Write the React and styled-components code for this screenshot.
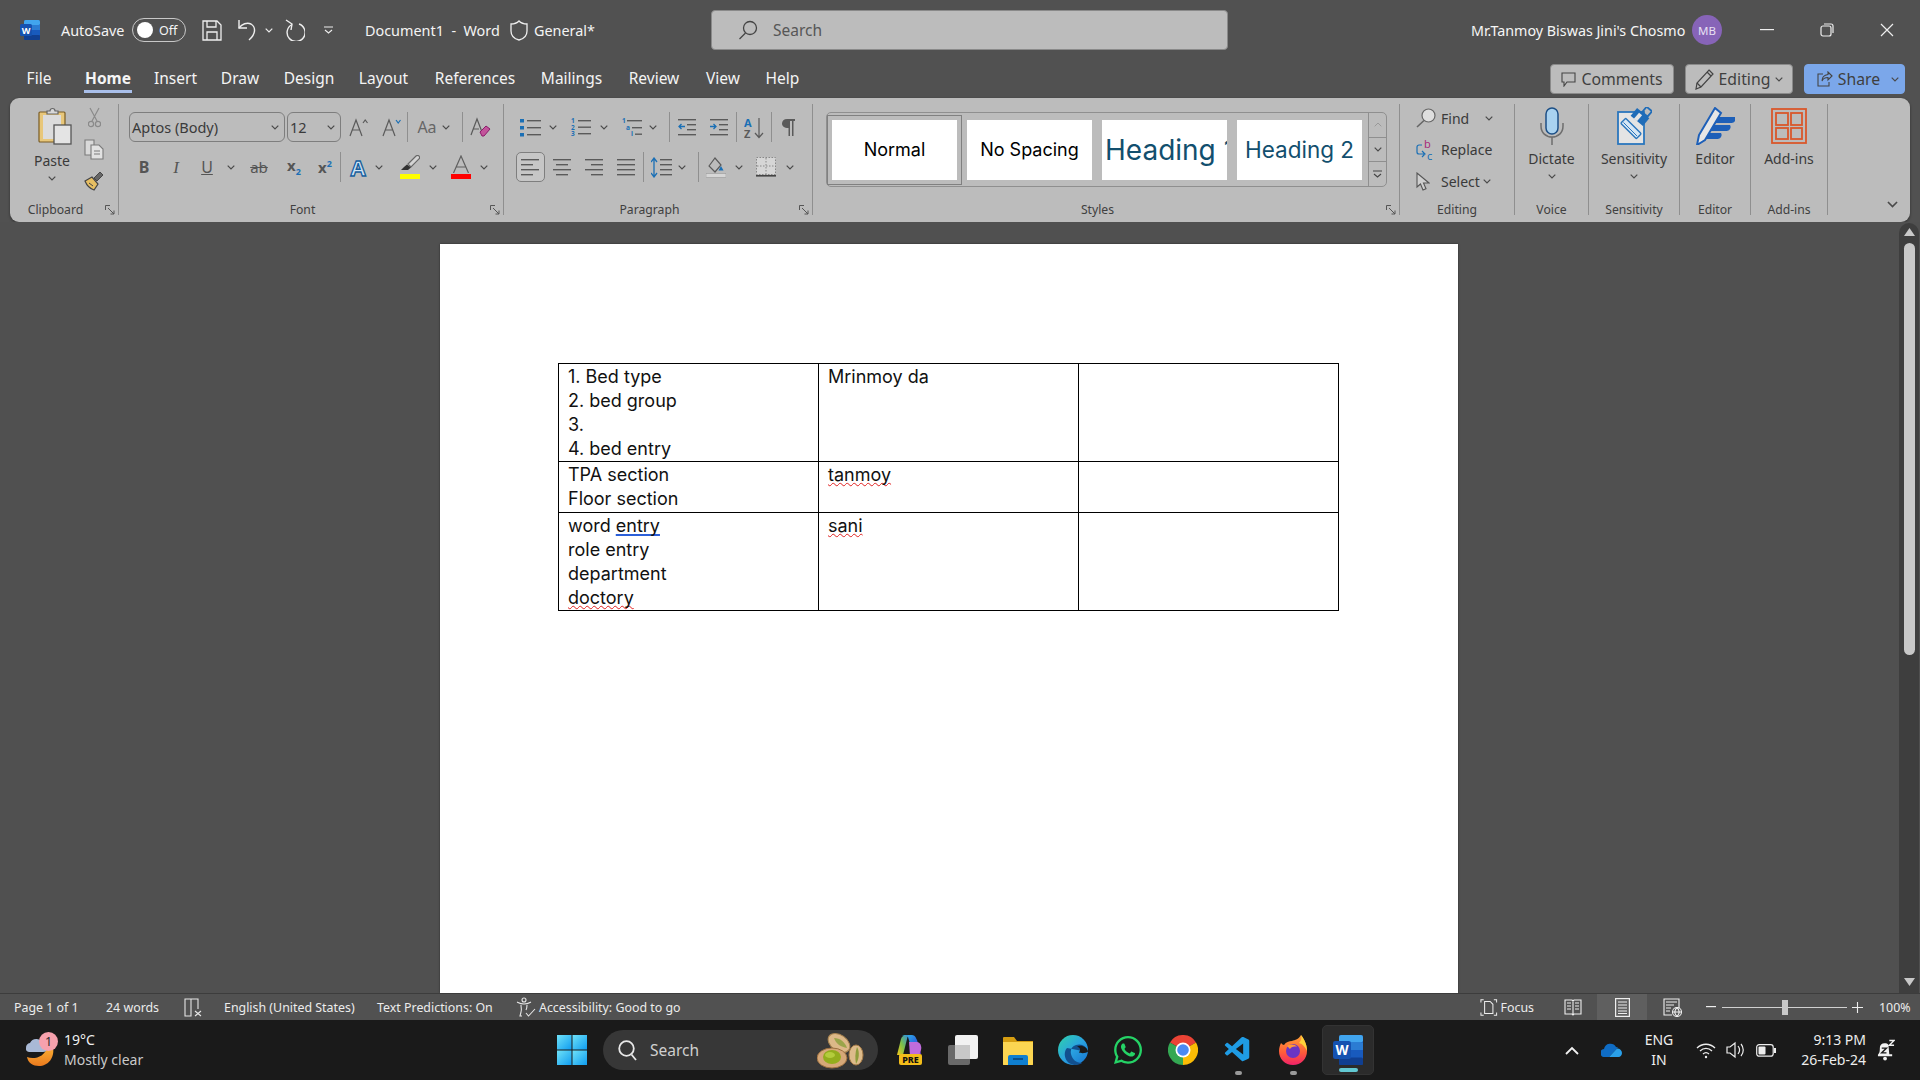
import React from 'react';
import styled, { createGlobalStyle } from 'styled-components';
import { FaWhatsapp } from 'react-icons/fa';
import { VscVscode } from 'react-icons/vsc';

const UI = '"Noto Sans", "Open Sans", sans-serif';
const Global = createGlobalStyle`
  html, body { margin: 0; padding: 0; background: #515151; overflow: hidden; }
  * { box-sizing: border-box; }
  body { font-family: ${UI}; }
`;
const Screen = styled.div`width: 1920px; height: 1080px; display: flex; flex-direction: column; background: #515151; overflow: hidden;`;

/* title bar */
const TitleBar = styled.div`height: 62px; flex: none; display: flex; align-items: center; color: #f4f4f4; font-size: 14.4px; padding: 0 0 2px 20px;`;
const TitleSlot = styled.div`flex: none; display: flex; align-items: center; justify-content: ${p => p.$center ? 'center' : 'flex-start'}; width: ${p => p.$w}px; margin-left: ${p => p.$ml || 0}px; white-space: nowrap; height: 40px;`;
const Toggle = styled.div`width: 54px; height: 24px; border: 1px solid #c8c8c8; border-radius: 12px; display: flex; align-items: center; gap: 6px; padding-left: 4px; font-size: 12.5px;`;
const Knob = styled.span`width: 16px; height: 16px; border-radius: 50%; background: #fff; flex: none;`;
const SearchBox = styled.div`width: 517px; height: 40px; background: #bcbcbc; border: 1px solid #8a8a8a; border-radius: 4px; display: flex; align-items: center; gap: 15px; padding-left: 26px; color: #565656; font-size: 15.5px;`;
const UserName = styled.div`width: 212px; white-space: nowrap; font-size: 14.3px; color: #f6f6f6;`;
const Avatar = styled.div`width: 30px; height: 30px; margin-left: 9px; border-radius: 50%; background: #8764b8; display: flex; align-items: center; justify-content: center; font-size: 11.5px; color: #e8e0f3;`;

/* tabs */
const TabRow = styled.div`height: 36px; flex: none; display: flex; align-items: flex-start; padding-left: 27px; position: relative;`;
const Tab = styled.div`flex: none; width: ${p => p.$w}px; margin-right: ${p => p.$gap}px; height: 31px; display: flex; justify-content: center; align-items: center; white-space: nowrap; color: #f4f4f4; font-size: 15.5px; font-weight: ${p => p.$on ? 700 : 400}; border-bottom: 3px solid ${p => p.$on ? '#a9bfea' : 'transparent'}; padding-top: 3px;`;
const TabActions = styled.div`margin-left: auto; display: flex; gap: 11px; padding-right: 15px; padding-top: 2px;`;
const ActionButton = styled.div`height: 30px; width: ${p => p.$w}px; border-radius: 4px; background: ${p => p.$blue ? '#7ba7ea' : '#bcbcbc'}; border: 1px solid ${p => p.$blue ? '#7ba7ea' : '#8a8a8a'}; color: #3f3f3f; font-size: 15.8px; display: flex; align-items: center; justify-content: center; gap: 5px; white-space: nowrap;`;
const ShareChev = styled.span`display: flex; margin-left: 6px; margin-right: -7px;`;

/* ribbon */
const Ribbon = styled.div`height: 124px; flex: none; margin: 0 10px; background: #bcbcbc; border-radius: 9px; display: flex; align-items: flex-start; box-shadow: 0 1px 3px rgba(0,0,0,.4); padding-top: 6px; color: #3c3c3c;`;
const Group = styled.div`flex: none; width: ${p => p.$w}px; height: 111px; border-right: 1px solid #8f8f8f; display: flex; flex-direction: column;`;
const GroupBody = styled.div`flex: none; height: 94px;`;
const GroupLabel = styled.div`flex: none; height: 20px; display: flex; align-items: center; font-size: 12.2px; color: #404040; padding-top: 3px;`;
const LabelText = styled.div`flex: 1; text-align: center;`;
const Launcher = styled.div`width: 17px; display: flex; justify-content: center;`;
const Rows = styled.div`padding-top: 8px; display: flex; flex-direction: column; gap: 10px;`;
const Row = styled.div`height: 30px; display: flex; align-items: center;`;
const Tool = styled.div`flex: none; width: ${p => p.$w}px; margin-left: ${p => p.$ml}px; height: 30px; display: flex; align-items: center; justify-content: center; font-size: ${p => p.$fs || 14}px;`;
const Sep = styled.div`width: 1px; height: 30px; background: #8f8f8f;`;
const Select = styled.div`flex: none; width: 100%; height: 30px; border: 1px solid #7e7e7e; border-radius: 6px; display: flex; align-items: center; justify-content: space-between; padding: 0 5px 0 2px; font-size: 14.5px; color: #3a3a3a; white-space: nowrap;`;
const Pressed = styled.div`width: 29px; height: 30px; border: 1px solid #7e7e7e; border-radius: 5px; background: #c6c6c6; display: flex; align-items: center; justify-content: center;`;
const ClipCols = styled.div`display: flex;`;
const PasteCol = styled.div`width: 68px; padding: 3px 0 0 16px; display: flex; flex-direction: column; align-items: center;`;
const PasteArt = styled.div`height: 38px; display: flex; align-items: center; margin-left: 5px;`;
const SmallCol = styled.div`width: 32px; padding-top: 3px; display: flex; flex-direction: column; align-items: center; gap: 12px;`;
const SmallIcon = styled.div`height: 20px; display: flex; align-items: center;`;
const BigLabel = styled.div`margin-top: ${p => p.$mt}px; height: 18px; line-height: 18px; font-size: 14px; color: #3a3a3a; white-space: nowrap;`;
const BigChev = styled.div`margin-top: 6px; height: 6px; display: flex;`;
const BigCol = styled.div`padding-top: 3px; display: flex; flex-direction: column; align-items: center; width: 100%;`;
const BigIcon = styled.div`height: 38px; display: flex; align-items: center; justify-content: center;`;
const Gallery = styled.div`margin: 8px 0 0 13px; width: 561px; height: 75px; border: 1px solid #8f8f8f; border-radius: 5px; display: flex; padding-left: 5px; gap: 10px; align-items: center;`;
const StyleTile = styled.div`flex: none; width: 125px; height: 60px; background: #fff; display: flex; align-items: center; justify-content: ${p => p.$left ? 'flex-start' : 'center'}; padding-left: ${p => p.$left ? 3 : 0}px; overflow: hidden; white-space: nowrap; font-family: Inter, sans-serif; font-size: ${p => p.$fs}px; color: ${p => p.$head ? '#124f6e' : '#000'}; outline: ${p => p.$sel ? '1px solid #808080' : 'none'}; outline-offset: 4px;`;
const GalleryScroll = styled.div`margin-left: -4px; width: 19px; height: 73px; border-left: 1px solid #8f8f8f; display: flex; flex-direction: column;`;
const GalleryBtn = styled.div`flex: 1; display: flex; align-items: center; justify-content: center; border-top: ${p => p.$line ? '1px solid #8f8f8f' : 'none'};`;
const EditCol = styled.div`padding: 2px 0 0 16px; display: flex; flex-direction: column; gap: 7.5px;`;
const EditRow = styled.div`height: 24px; display: flex; align-items: center; font-size: 14px; color: #3a3a3a;`;
const EditIcon = styled.div`width: 25px; flex: none; display: flex; align-items: center;`;
const EditChev = styled.div`margin-left: ${p => p.$ml}px; display: flex;`;
const Collapse = styled.div`flex: 1; height: 111px; display: flex; align-items: flex-end; justify-content: flex-end; padding: 0 12px 7px 0;`;

/* document */
const Workspace = styled.div`flex: 1; min-height: 0; display: flex; background: #505050; padding-top: 22px; padding-left: 440px;`;
const Page = styled.div`width: 1018px; flex: none; background: #fff; padding: 119px 0 0 118px; font-family: Inter, sans-serif; font-size: 18px; color: #111; box-shadow: 0 0 2px rgba(0,0,0,.5);`;
const DocTable = styled.table`border-collapse: collapse; table-layout: fixed; width: 781px;`;
const Cell = styled.td`border: 1.4px solid #000; padding: 1px 9px 0; vertical-align: top; height: ${p => p.$h}px; line-height: 24.1px;`;
const Line = styled.div`white-space: nowrap;`;
const Spell = styled.span`text-decoration: underline wavy #e02020 1px; text-underline-offset: 1px; text-decoration-skip-ink: none;`;
const Grammar = styled.span`text-decoration: underline solid #2b5fd8 1.5px; text-underline-offset: 2px; text-decoration-skip-ink: none;`;
const ScrollTrack = styled.div`width: 20px; flex: none; margin: -21px 1px 0 auto; background: #3e3e3e; border-radius: 10px 10px 0 0; display: flex; flex-direction: column; align-items: center; padding: 5px 0 7px 0;`;
const ScrollThumb = styled.div`width: 11px; height: 412px; margin: 7px 0 auto; background: #c8c8c8; border-radius: 6px;`;

/* status */
const StatusBar = styled.div`height: 27px; flex: none; background: #515151; border-top: 1px solid #3c3c3c; display: flex; align-items: center; color: #ececec; font-size: 12.4px;`;
const StatusItem = styled.div`flex: none; width: ${p => p.$w}px; margin-left: ${p => p.$ml}px; height: 26px; white-space: nowrap; display: flex; align-items: center; justify-content: ${p => p.$center ? 'center' : 'flex-start'}; background: ${p => p.$on ? '#5f5f5f' : 'transparent'}; gap: 3px;`;
const Slider = styled.div`width: 125px; margin-left: 6px; height: 1px; background: #d0d0d0; display: flex; align-items: center; flex: none; padding-left: 60px;`;
const Thumb = styled.div`width: 6px; height: 15px; background: #c8c8c8;`;

/* taskbar */
const Taskbar = styled.div`height: 60px; flex: none; background: #1a1a1a; display: flex; align-items: center; color: #f0f0f0;`;
const Weather = styled.div`flex: none; width: 146px; margin-left: 25px; display: flex; align-items: center; gap: 9px;`;
const WeatherIcon = styled.div`width: 30px; height: 34px; position: relative; flex: none;`;
const Badge = styled.div`position: absolute; left: 14px; top: -1px; width: 19px; height: 19px; border-radius: 50%; background: #f7a1ad; color: #2a2a2a; font-size: 12.5px; display: flex; align-items: center; justify-content: center;`;
const WeatherText = styled.div`font-size: 14px; line-height: 20px; color: #c9c9c9; white-space: nowrap;`;
const WeatherTemp = styled.div`color: #f0f0f0;`;
const StartBtn = styled.div`flex: none; margin-left: 386px; width: 30px; height: 30px;`;
const TaskSearch = styled.div`flex: none; margin-left: 16px; width: 275px; height: 40px; border-radius: 20px; background: #373737; display: flex; align-items: center; padding-left: 15px; gap: 13px; font-size: 15.5px; color: #cfcfcf;`;
const TaskSearchEnd = styled.div`margin-left: auto; padding-right: 13px; display: flex;`;
const Apps = styled.div`flex: none; margin-left: 15px; display: flex; gap: 25px; align-items: center;`;
const AppIcon = styled.div`width: 30px; height: 30px; position: relative; display: flex; align-items: center; justify-content: center;`;
const Dot = styled.div`position: absolute; left: 50%; margin-left: -3px; bottom: -10px; width: 7px; height: 4px; border-radius: 2px; background: #9a9a9a;`;
const ActiveApp = styled.div`flex: none; margin-left: 14px; width: 52px; height: 50px; border-radius: 5px; background: #2b2b2b; border: 1px solid #333; display: flex; align-items: center; justify-content: center; position: relative;`;
const ActiveBar = styled.div`position: absolute; bottom: 2px; left: 16px; width: 19px; height: 4px; border-radius: 2px; background: #62c8d2;`;
const Tray = styled.div`flex: none; margin-left: auto; padding-right: 25px; display: flex; align-items: center;`;
const TrayItem = styled.div`flex: none; width: ${p => p.$w}px; margin-left: ${p => p.$ml}px; display: flex; justify-content: center; align-items: center;`;
const TrayText = styled.div`flex: none; width: ${p => p.$w}px; margin-left: ${p => p.$ml}px; font-size: 14px; line-height: 20px; text-align: ${p => p.$right ? 'right' : 'center'}; color: #eee; white-space: nowrap;`;

/* ---------- icons ---------- */
const G = '#5a5a5a';
const B = '#1a6fb5';
const WordLogo = ({ s = 20 }) => (
  <svg width={s} height={s} viewBox="0 0 20 20">
    <rect x="4" y="0" width="16" height="20" rx="1.5" fill="#185abd" />
    <rect x="4" y="0" width="16" height="5" rx="1.5" fill="#41a5ee" />
    <rect x="4" y="5" width="16" height="5" fill="#2b7cd3" />
    <rect x="4" y="15" width="16" height="5" rx="1" fill="#103f91" />
    <rect x="0" y="4" width="12" height="12" rx="1.5" fill="#1552b0" />
    <text x="6" y="13.5" fontSize="9" fontWeight="700" textAnchor="middle" fill="#fff" fontFamily="Noto Sans">W</text>
  </svg>
);
const Chev = ({ c = '#4a4a4a', w = 8, h = 5 }) => (
  <svg width={w} height={h} viewBox="0 0 8 5"><path d="M.7.7 4 4 7.3.7" fill="none" stroke={c} strokeWidth="1.2" /></svg>
);
const SaveIco = () => (
  <svg width="20" height="21" viewBox="0 0 20 21" fill="none" stroke="#eee" strokeWidth="1.3"><path d="M1 1h14l4 4v15H1z" /><path d="M5 1v6h9V1M5 20v-8h10v8" /></svg>
);
const UndoIco = () => (
  <svg width="25" height="22" viewBox="0 0 25 22" fill="none" stroke="#eee" strokeWidth="1.4"><path d="M2 1v8h8" /><path d="M2 9c3-4 8-6 12-4 5 3 5 10-2 16" /></svg>
);
const RedoIco = () => (
  <svg width="21" height="22" viewBox="0 0 21 22" fill="none" stroke="#eee" strokeWidth="1.4"><path d="M8 5.5A9 9 0 1 0 15 5" /><path d="M2 1l6 4-1 6" /></svg>
);
const QatIco = ({ c = '#eee' }) => (
  <svg width="9" height="9" viewBox="0 0 9 9" fill="none" stroke={c} strokeWidth="1.1"><path d="M0 1h9M1 4l3.500 3L8 4" /></svg>
);
const ShieldIco = () => (
  <svg width="18" height="21" viewBox="0 0 18 21" fill="none" stroke="#eee" strokeWidth="1.3"><path d="M9 1c2 2 5 3 8 3v7c0 5-4 8-8 9-4-1-8-4-8-9V4c3 0 6-1 8-3z" /></svg>
);
const SearchGlass = ({ c = '#444', s = 20 }) => (
  <svg width={s} height={s} viewBox="0 0 20 20" fill="none" stroke={c} strokeWidth="1.3"><circle cx="12" cy="8" r="6.5" /><path d="M7.5 13 1.5 19" /></svg>
);
const SearchGlassTask = () => (
  <svg width="19" height="21" viewBox="0 0 19 21" fill="none" stroke="#e8e8e8" strokeWidth="1.800"><circle cx="8.500" cy="8.500" r="7.300" /><path d="M13.500 14.500 18 20" /></svg>
);
const WinMin = () => <svg width="14" height="2"><rect width="14" height="1.2" fill="#eee" /></svg>;
const WinRestore = () => (
  <svg width="14" height="14" viewBox="0 0 14 14" fill="none" stroke="#eee" strokeWidth="1.2"><rect x="1" y="3" width="10" height="10" rx="2" /><path d="M4 1h7a2 2 0 0 1 2 2v7" /></svg>
);
const WinClose = () => (
  <svg width="14" height="14" viewBox="0 0 14 14" stroke="#eee" strokeWidth="1.2"><path d="M1 1l12 12M13 1 1 13" /></svg>
);
const CommentIco = () => (
  <svg width="15" height="15" viewBox="0 0 15 15" fill="none" stroke="#444" strokeWidth="1.1"><path d="M1 1h13v9H6l-3 4v-4H1z" /></svg>
);
const PencilIco = () => (
  <svg width="19" height="21" viewBox="0 0 19 21" fill="none" stroke="#444" strokeWidth="1.2"><path d="M14 1l4 4L6 18l-5 2 1-6z" /><path d="M12 3l4 4M2 14l4 4" /></svg>
);
const Marker = () => (
  <svg width="20" height="18" viewBox="0 0 20 18"><path d="M8 9l8-8c1-.8 2-.8 3 0 .8 1 .8 2 0 3l-8 8z" fill="#d4d4d4" stroke="#666" strokeWidth="1.100" /><path d="M7 9.500l4 3-3 2.500H1l3-3z" fill="#333" /></svg>
);
const ThinA = () => (
  <svg width="18" height="18" viewBox="0 0 18 18" fill="none" stroke="#5f5f5f" strokeWidth="1.200"><path d="M1.500 18 9 1l7.500 17M4.500 12h9" /></svg>
);
const ShareIco = () => (
  <svg width="16" height="16" viewBox="0 0 16 16" fill="none" stroke="#444" strokeWidth="1.1"><path d="M6 3H1v12h11v-4" /><path d="M15 5l-4-4v2.500C7 4 5 7 5 10c1-2.500 3-3.500 6-3.500V9z" /></svg>
);
const PasteIco = () => (
  <svg width="34" height="38" viewBox="0 0 34 38">
    <rect x="1" y="5" width="26" height="30" rx="1" fill="#e8c77a" stroke="#7a5c24" strokeWidth="1.2" />
    <rect x="5" y="8" width="18" height="24" fill="#dcdcdc" />
    <path d="M9 7V4h3a2.500 2.500 0 0 1 5 0h3v3z" fill="#d8d8d8" stroke="#666" strokeWidth="1.2" />
    <rect x="16" y="18" width="17" height="19" fill="#e4e4e4" stroke="#555" strokeWidth="1.3" />
  </svg>
);
const CutIco = () => (
  <svg width="13" height="21" viewBox="0 0 13 21" fill="none" stroke="#8a8a8a" strokeWidth="1.2"><path d="M2 1l7 13M11 1 4 14" /><circle cx="3" cy="17" r="2.600" /><circle cx="10" cy="17" r="2.600" /></svg>
);
const CopyIco = () => (
  <svg width="20" height="21" viewBox="0 0 20 21" fill="#d9d9d9" stroke="#7a7a7a" strokeWidth="1.1"><path d="M1 1h9v15H1z" /><path d="M7 6h8l4 4v10H7z" fill="#e2e2e2" /><path d="M10 12h6M10 15h6" fill="none" /></svg>
);
const BrushIco = () => (
  <svg width="20" height="20" viewBox="0 0 20 20"><path d="M1 10l7-4 6 7-4 6c-3-1-7-4-9-9z" fill="#e6be62" stroke="#444" strokeWidth="1.2" /><path d="M10 7l6-6 3 3-6 6z" fill="#666" stroke="#333" strokeWidth=".8" /><path d="M5 12l4 3" stroke="#444" /></svg>
);
const Launch = () => (
  <svg width="10" height="10" viewBox="0 0 10 10" fill="none" stroke="#555" strokeWidth="1"><path d="M.5 5V.5H5M3 3l6 6M9 5.500V9H5.500" /></svg>
);
const GrowA = ({ up }) => (
  <svg width="19" height="19" viewBox="0 0 19 19" fill="none" stroke={G} strokeWidth="1.2"><path d="M1 18 7 2l6 16M3.500 12h7" /><path d={up ? 'M14 5l2.200-3L18.500 5' : 'M14 2l2.200 3 2.300-3'} stroke={up ? G : B} /></svg>
);
const ClearIco = () => (
  <svg width="21" height="21" viewBox="0 0 21 21" fill="none"><path d="M1 18 7 2l5 13M3 12h6" stroke={G} strokeWidth="1.2" /><path d="M10 15l6-6 4 3-6 7h-2z" fill="#c2549a" stroke="#8a1a6a" strokeWidth="1" /></svg>
);
const Lines = ({ kind }) => {
  const rows = { left: [[0, 18], [0, 12], [0, 18], [0, 12]], center: [[0, 18], [3, 12], [0, 18], [3, 12]], right: [[0, 18], [6, 12], [0, 18], [6, 12]], just: [[0, 18], [0, 18], [0, 18], [0, 18]] }[kind];
  return <svg width="18" height="18" viewBox="0 0 18 18">{rows.map((r, i) => <rect key={i} x={r[0]} y={1 + i * 5} width={r[1]} height="1.400" fill={G} />)}</svg>;
};
const Bullets = () => (
  <svg width="21" height="19" viewBox="0 0 21 19">{[1, 8, 15].map(y => <g key={y}><rect x="0" y={y} width="4" height="3.500" fill={B} /><rect x="7" y={y + 1} width="14" height="1.400" fill={G} /></g>)}</svg>
);
const Numbers = () => (
  <svg width="20" height="24" viewBox="0 -2 20 24">{['1', '2', '3'].map((n, i) => <g key={n}><text x="0" y={6 + i * 6.5} fontSize="6.500" fontWeight="700" fill={B} fontFamily="Noto Sans">{n}</text><rect x="7" y={3 + i * 6.5} width="13" height="1.400" fill={G} /></g>)}</svg>
);
const Multi = () => (
  <svg width="20" height="24" viewBox="0 -2 20 24"><text x="0" y="6" fontSize="6.500" fontWeight="700" fill={B} fontFamily="Noto Sans">1</text><rect x="5" y="3" width="15" height="1.400" fill={G} /><text x="4" y="12.500" fontSize="6.500" fontWeight="700" fill={B} fontFamily="Noto Sans">a</text><rect x="10" y="10" width="10" height="1.400" fill={G} /><text x="9" y="19" fontSize="6.500" fontWeight="700" fill={B} fontFamily="Noto Sans">i</text><rect x="13" y="16.500" width="7" height="1.400" fill={G} /></svg>
);
const Indent = ({ out }) => (
  <svg width="18" height="18" viewBox="0 0 18 18"><rect width="18" height="1.400" y="1" fill={G} /><rect x="9" width="9" height="1.400" y="6" fill={G} /><rect x="9" width="9" height="1.400" y="11" fill={G} /><rect width="18" height="1.400" y="16" fill={G} /><path d={out ? 'M7 8.500H1M3.500 6 1 8.500 3.500 11' : 'M0 8.500h6M3.500 6 6 8.500 3.500 11'} fill="none" stroke={B} strokeWidth="1.3" /></svg>
);
const SortIco = () => (
  <svg width="21" height="27" viewBox="0 -3 21 27"><text x="0" y="9.500" fontSize="11" fontWeight="700" fill={B} fontFamily="Noto Sans">A</text><text x="0" y="21" fontSize="11" fontWeight="700" fill={G} fontFamily="Noto Sans">Z</text><path d="M15 1v19M11 16l4 4.500 4-4.500" fill="none" stroke={G} strokeWidth="1.2" /></svg>
);
const Pilcrow = () => (
  <svg width="13" height="18" viewBox="0 0 13 18"><path d="M5 1h8v2h-1.500v15H10V3H8v15H6.500V10C2 10 0 8 0 5.500S2 1 5 1z" fill={G} /></svg>
);
const LineSp = () => (
  <svg width="21" height="21" viewBox="0 0 21 21"><path d="M3 1v19M0 5l3-4 3 4M0 16l3 4 3-4" fill="none" stroke={B} strokeWidth="1.300" /><g fill={G}><rect x="9" y="2" width="12" height="1.400" /><rect x="9" y="7" width="12" height="1.400" /><rect x="9" y="12" width="12" height="1.400" /><rect x="9" y="17" width="12" height="1.400" /></g></svg>
);
const Shade = () => (
  <svg width="20" height="22" viewBox="0 0 20 22"><path d="M3 10l6-8 6 7-6 7z" fill="none" stroke={G} strokeWidth="1.200" /><path d="M15 10l2.500 4.500h-5z" fill={B} /><rect y="17.500" width="20" height="4" fill="#d6d6d6" stroke="#999" strokeWidth=".6" /></svg>
);
const Borders = () => (
  <svg width="20" height="20" viewBox="0 0 20 20"><rect x=".5" y=".5" width="19" height="17" fill="#d6d6d6" stroke="#888" strokeDasharray="1.500 1.500" /><path d="M10 1v17M1 9h18" stroke="#888" strokeDasharray="1.500 1.500" /><rect y="18" width="20" height="1.600" fill="#444" /></svg>
);
const ReplaceIco = () => (
  <svg width="19" height="26" viewBox="0 -3 19 26"><text x="8" y="8" fontSize="11" fill="#a82a7a" fontFamily="Noto Sans">b</text><text x="11" y="20" fontSize="11" fill={B} fontFamily="Noto Sans">c</text><path d="M6 5H3a2 2 0 0 0-2 2v5a2 2 0 0 0 2 2h5M6 11l3 3-3 3" fill="none" stroke={B} strokeWidth="1.200" /></svg>
);
const SelectIco = () => (
  <svg width="14" height="19" viewBox="0 0 14 19"><path d="M1 1v14l3.500-3 2.500 6 3-1.200L7.500 11H13z" fill="#cfcfcf" stroke="#555" strokeWidth="1.100" /></svg>
);
const FindIco = () => (
  <svg width="20" height="20" viewBox="0 0 20 20"><circle cx="12.500" cy="7.500" r="6.500" fill="#dedede" stroke="#666" strokeWidth="1.200" /><path d="M8 12.500 1 19" stroke="#666" strokeWidth="1.600" /></svg>
);
const Mic = () => (
  <svg width="24" height="38" viewBox="0 0 24 38"><rect x="6" y="1" width="12" height="26" rx="6" fill="#a9d2f0" stroke="#1c4f86" strokeWidth="1.500" /><path d="M1 16v3c0 7 5 11 11 11s11-4 11-11v-3M12 30v8" fill="none" stroke="#6e6e6e" strokeWidth="1.500" /></svg>
);
const Sensi = () => (
  <svg width="35" height="38" viewBox="0 0 35 38">
    <rect x="1" y="5" width="26" height="32" fill="#e4e4e4" stroke="#2a76bd" strokeWidth="1.800" />
    <rect x="3" y="18" width="22" height="7" rx="1" transform="rotate(45 14 21.500)" fill="#d6e6f4" stroke="#2a76bd" strokeWidth="1.400" />
    <path d="M6.500 15.500 20 29" stroke="#2a76bd" strokeWidth="1" />
    <rect x="15" y="5" width="16" height="10" transform="rotate(40 23 10)" fill="#1f6cb8" />
    <rect x="19" y="6" width="4" height="8" transform="rotate(40 21 10)" fill="#e4e4e4" />
    <rect x="27" y="1" width="7" height="7" transform="rotate(40 30 4)" fill="none" stroke="#1f6cb8" strokeWidth="1.800" />
  </svg>
);
const EditorIco = () => (
  <svg width="39" height="38" viewBox="0 0 39 38"><path d="M18 10h21a4 4 0 0 1-4 6H15zM14 18h20a4 4 0 0 1-4 6H11zM10 26h15a4 4 0 0 1-4 6H7z" fill="#1d5fb8" /><path d="M19 1l6 5L9 33l-8 5 2-10z" fill="#e6e6e6" stroke="#1d5fb8" strokeWidth="2" /></svg>
);
const AddIns = () => (
  <svg width="36" height="36" viewBox="0 0 36 36" fill="none" stroke="#d9572b" strokeWidth="1.800"><rect x="1" y="1" width="34" height="34" /><rect x="5" y="5" width="12" height="12" /><rect x="20" y="5" width="11" height="12" /><rect x="5" y="20" width="12" height="11" /><rect x="20" y="20" width="11" height="11" /></svg>
);
const ProofIco = () => (
  <svg width="19" height="19" viewBox="0 0 19 19" fill="none" stroke="#e6e6e6" strokeWidth="1.100"><path d="M1 1h6v17H1zM7 1h7v10" /><path d="M11 13l6 5M17 13l-6 5" /></svg>
);
const A11y = () => (
  <svg width="20" height="21" viewBox="0 0 20 21" fill="none" stroke="#e6e6e6" strokeWidth="1.100"><circle cx="8" cy="3" r="2" /><path d="M1 5c2 1 3 2 7 2s5-1 7-2M5 8c0 3 1 5 0 7l-1 4h2M11 8c0 2 0 3-1 5" /><path d="M10 16l2.500 3L19 12" /></svg>
);
const FocusIco = () => (
  <svg width="19" height="19" viewBox="0 0 19 19" fill="none" stroke="#eee" strokeWidth="1.100"><path d="M1 4V1h3M15 1h3v3M1 15v3h3M15 18h3v-3" /><path d="M5 3h6l3 3v10H5z" /></svg>
);
const ReadIco = () => (
  <svg width="18" height="17" viewBox="0 0 18 17" fill="none" stroke="#eee" strokeWidth="1.100"><path d="M1 1h7l1 1 1-1h7v14h-7l-1 1-1-1H1zM9 2v13M3 4h4M3 7h4M3 10h4M11 4h4M11 7h4M11 10h4" /></svg>
);
const PrintIco = () => (
  <svg width="15" height="19" viewBox="0 0 15 19" fill="none" stroke="#eee" strokeWidth="1.200"><rect x=".6" y=".6" width="13.800" height="17.800" /><path d="M3 4h9M3 7h9M3 10h9M3 13h9M3 15.500h9" /></svg>
);
const WebIco = () => (
  <svg width="19" height="19" viewBox="0 0 19 19" fill="none" stroke="#eee" strokeWidth="1.100"><path d="M9 17H1V1h15v9M3 4h11M3 7h8M3 10h5M3 13h4" /><circle cx="14" cy="14" r="4.500" fill="#555" /><path d="M9.500 14h9M14 9.500c-3 3-3 6 0 9M14 9.500c3 3 3 6 0 9" /></svg>
);
const WeatherArt = () => (
  <svg width="30" height="34" viewBox="0 0 30 34">
    <defs><linearGradient id="moon" x1="0" y1="0" x2="0" y2="1"><stop offset="0" stopColor="#fbb034" /><stop offset="1" stopColor="#ea7a1e" /></linearGradient></defs>
    <path d="M28 14c2 11-5 19-14 19C8 33 3 30 2 24c7 3 18 0 20-10z" fill="url(#moon)" />
    <path d="M1 15a5 5 0 0 1 4-5 7 7 0 0 1 13 1 4 4 0 0 1 0 8H4a3.500 3.500 0 0 1-3-4z" fill="#a9b9d6" />
  </svg>
);
const WinLogo = () => (
  <svg width="30" height="30" viewBox="0 0 30 30">
    <defs><linearGradient id="win" x1="0" y1="0" x2="1" y2="1"><stop offset="0" stopColor="#6fe2f8" /><stop offset="1" stopColor="#0f9cf0" /></linearGradient></defs>
    <rect x="0" y="0" width="14.500" height="14.500" fill="url(#win)" /><rect x="15.500" y="0" width="14.500" height="14.500" fill="url(#win)" /><rect x="0" y="15.500" width="14.500" height="14.500" fill="url(#win)" /><rect x="15.500" y="15.500" width="14.500" height="14.500" fill="url(#win)" />
  </svg>
);
const Pistachio = () => (
  <svg width="48" height="38" viewBox="0 0 48 38">
    <ellipse cx="39" cy="24" rx="7" ry="10" fill="#ddbb8a" stroke="#a77c48" /><path d="M40 16c3 5 2 12-1 17-1-6-1-11 1-17z" fill="#8f9c3c" />
    <ellipse cx="22" cy="12" rx="12" ry="8" transform="rotate(35 22 12)" fill="#dcb888" stroke="#a98450" /><path d="M17 7c6 0 11 4 13 10-6-1-11-4-13-10z" fill="#9aa44a" />
    <ellipse cx="15" cy="27" rx="15" ry="10" fill="#d6a878" stroke="#9c7040" /><ellipse cx="15" cy="26" rx="9" ry="7" fill="#93ad1d" /><ellipse cx="13" cy="24" rx="5" ry="3" fill="#b4cc3c" />
  </svg>
);
const Copilot = () => (
  <svg width="30" height="34" viewBox="0 0 30 34">
    <defs><linearGradient id="cp1" x1="0" y1="0" x2="1" y2="1"><stop offset="0" stopColor="#2ec4e8" /><stop offset=".5" stopColor="#2b6fe0" /><stop offset="1" stopColor="#7c3fe0" /></linearGradient><linearGradient id="cp2" x1="0" y1="1" x2="1" y2="0"><stop offset="0" stopColor="#f5c71a" /><stop offset=".5" stopColor="#7cc04a" /><stop offset="1" stopColor="#2f8fe0" /></linearGradient></defs>
    <path d="M9 2h10c3 0 4 3 5 5l4 14-8-1L15 4z" fill="url(#cp1)" /><path d="M4 22 8 6c1-3 3-4 7-4l-5 20z" fill="url(#cp2)" /><path d="M16 9h8c3 0 5 4 4 8l-2 6h-9z" fill="#c06cdc" />
    <rect x="6" y="21" width="23" height="11" rx="2" fill="#f3bd1a" /><text x="17.500" y="30" fontSize="9" fontWeight="800" textAnchor="middle" fill="#111" fontFamily="Noto Sans">PRE</text>
  </svg>
);
const TaskView = () => (
  <svg width="30" height="30" viewBox="0 0 30 30"><rect x="7" y="0" width="23" height="24" rx="2" fill="#f2f2f2" /><rect x="0" y="10" width="22" height="20" rx="2" fill="#6e6e6e" opacity=".95" /><rect x="7" y="10" width="15" height="14" fill="#c8c8c8" /></svg>
);
const Explorer = () => (
  <svg width="30" height="30" viewBox="0 0 30 30"><path d="M0 3a1 1 0 0 1 1-1h10l3 4h16v24H0z" fill="#d69e11" /><path d="M0 7h30v22a1 1 0 0 1-1 1H1a1 1 0 0 1-1-1z" fill="#fcd652" /><path d="M5 30v-8a2 2 0 0 1 2-2h16a2 2 0 0 1 2 2v8z" fill="#0f7fd0" /><rect x="10" y="23" width="10" height="2" fill="#0a4f8a" /></svg>
);
const Edge = () => (
  <svg width="30" height="30" viewBox="0 0 30 30">
    <defs><linearGradient id="ed" x1="0" y1="0" x2="1" y2="1"><stop offset="0" stopColor="#2fd3a8" /><stop offset=".5" stopColor="#2aa3e0" /><stop offset="1" stopColor="#1673d0" /></linearGradient></defs>
    <circle cx="15" cy="15" r="15" fill="url(#ed)" /><path d="M30 17c-1-5-6-9-12-7-4 1-6 5-5 9 1 5 5 9 11 9-4 3-11 3-15-2-3-4-3-10 0-13" fill="#12508f" /><path d="M30 16.500c-2 2-7 2-9 1 2-3 1-5-2-6 4-2 10 0 11 5z" fill="#1a1a1a" />
  </svg>
);
const Chrome = () => (
  <svg width="30" height="30" viewBox="0 0 30 30"><path d="M15 15 2 7.500A15 15 0 0 1 28 7.500z" fill="#ea4335" /><path d="M15 15 28 7.500A15 15 0 0 1 15 30z" fill="#fbbc05" /><path d="M15 15 15 30A15 15 0 0 1 2 7.500z" fill="#34a853" /><circle cx="15" cy="15" r="7.500" fill="#fff" /><circle cx="15" cy="15" r="5.800" fill="#4a8af4" /></svg>
);
const Firefox = () => (
  <svg width="28" height="30" viewBox="0 0 28 30">
    <defs><linearGradient id="ff" x1="0" y1="0" x2="0" y2="1"><stop offset="0" stopColor="#ffa436" /><stop offset=".6" stopColor="#ff5a3a" /><stop offset="1" stopColor="#f0226a" /></linearGradient></defs>
    <path d="M22 0c3 4 6 9 6 16 0 8-6 14-14 14S0 24 0 16c0-3 1-6 2-8 1 1 2 2 3 2 2-3 5-4 8-4 3-1 7-2 9-6z" fill="url(#ff)" /><path d="M22 0c3 4 6 9 6 16-2-4-4-7-8-8 2-2 3-5 2-8z" fill="#ffd23a" /><circle cx="14" cy="16" r="7" fill="#6a35c4" /><path d="M8 11c3-2 8-2 10 1-3-1-6 0-7 2z" fill="#ff9a3a" />
  </svg>
);
const TrayChevron = () => (
  <svg width="14" height="9" viewBox="0 0 14 9" fill="none" stroke="#f2f2f2" strokeWidth="1.800"><path d="M1 8l6-6 6 6" /></svg>
);
const OneDrive = () => (
  <svg width="21" height="14" viewBox="0 0 21 14"><path d="M4 14a4 4 0 0 1-1-8 6.500 6.500 0 0 1 12-2 4.800 4.800 0 0 1 2 .5L8 14z" fill="#0f6cc4" /><path d="M8 14l8-8.500A4.500 4.500 0 0 1 21 10c0 2-1.500 4-3.500 4z" fill="#2aa0ea" /></svg>
);
const Wifi = () => (
  <svg width="20" height="17" viewBox="0 0 20 17" fill="none" stroke="#eee" strokeWidth="1.300"><path d="M1 6c5-5 13-5 18 0M4 9c3.500-3.500 8.500-3.500 12 0M7 12c2-1.800 4-1.800 6 0" /><circle cx="10" cy="15" r="1.200" fill="#eee" stroke="none" /></svg>
);
const Vol = () => (
  <svg width="20" height="18" viewBox="0 0 20 18" fill="none" stroke="#eee" strokeWidth="1.200"><path d="M1 6v6h3l5 4V2L4 6z" /><path d="M12 5c2 2.500 2 5.500 0 8M15 3c3 3.500 3 8.500 0 12" /></svg>
);
const Battery = () => (
  <svg width="20" height="13" viewBox="0 0 20 13"><rect x=".7" y=".7" width="16.500" height="11.500" rx="2.500" fill="none" stroke="#eee" strokeWidth="1.200" /><rect x="2.500" y="2.500" width="7" height="8" rx="1" fill="#eee" /><rect x="18" y="4" width="2" height="5" fill="#eee" /></svg>
);
const Bell = () => (
  <svg width="19" height="22" viewBox="0 0 19 22"><path d="M1 16c1-1 2-2 2-7 0-3 2-5 5-5 2 0 3 .5 4 1.500l1 10h3v2H1z" fill="#f2f2f2" /><circle cx="8.500" cy="20" r="2" fill="#f2f2f2" /><path d="M13 1h5l-5 5h5" fill="none" stroke="#f2f2f2" strokeWidth="1.500" /><path d="M5 9h5l-5 5h5" fill="none" stroke="#1a1a1a" strokeWidth="1.500" /></svg>
);
const ScrollArrow = ({ up }) => (
  <svg width="11" height="8" viewBox="0 0 11 8"><path d={up ? 'M5.500 0 11 8H0z' : 'M5.500 8 0 0h11z'} fill="#c8c8c8" /></svg>
);

/* ---------- helpers ---------- */
// Places tools in flow: each item is [centre x, width, node]; the margins are derived from the centres.
function ToolRow({ start, items }) {
  let cur = start;
  return (
    <Row>
      {items.map(([c, w, node], i) => {
        const ml = c - w / 2 - cur;
        cur = c + w / 2;
        return <Tool key={i} $w={w} $ml={ml}>{node}</Tool>;
      })}
    </Row>
  );
}
const GroupFoot = ({ label, launch }) => (
  <GroupLabel>
    <LabelText>{label}</LabelText>
    {launch && <Launcher><Launch /></Launcher>}
  </GroupLabel>
);

const Letter = styled.span`font-family: ${p => p.$serif ? '"Liberation Serif", serif' : UI}; font-weight: ${p => p.$b ? 700 : 400}; font-style: ${p => p.$i ? 'italic' : 'normal'}; text-decoration: ${p => p.$u ? 'underline' : p.$s ? 'line-through' : 'none'}; font-size: ${p => p.$fs || 15}px; color: #555; line-height: 1;`;
const Sub = styled.sub`font-size: 9px; color: ${B}; font-weight: 700;`;
const Sup = styled.sup`font-size: 9px; color: ${B}; font-weight: 700;`;
const ColorA = styled.div`display: flex; flex-direction: column; align-items: center; gap: 1px;`;
const Swatch = styled.div`width: 20px; height: 5px; background: ${p => p.$c};`;
const AaText = styled.span`font-size: 16px; color: #666;`;
const OutlineA = styled.span`font-size: 22px; font-weight: 700; color: #cfe4f6; -webkit-text-stroke: 1.3px #155e9e; line-height: 1;`;

export default function App() {
  return (
    <Screen>
      <Global />
      <TitleBar>
        <TitleSlot $w={20}><WordLogo /></TitleSlot>
        <TitleSlot $w={64} $ml={21}>AutoSave</TitleSlot>
        <TitleSlot $w={54} $ml={7}><Toggle><Knob />Off</Toggle></TitleSlot>
        <TitleSlot $w={20} $ml={16}><SaveIco /></TitleSlot>
        <TitleSlot $w={25} $ml={15}><UndoIco /></TitleSlot>
        <TitleSlot $w={10} $ml={2} $center><Chev c="#eee" /></TitleSlot>
        <TitleSlot $w={21} $ml={10}><RedoIco /></TitleSlot>
        <TitleSlot $w={9} $ml={19}><QatIco /></TitleSlot>
        <TitleSlot $w={134} $ml={32}>Document1&nbsp; -&nbsp; Word</TitleSlot>
        <TitleSlot $w={18} $ml={11}><ShieldIco /></TitleSlot>
        <TitleSlot $w={60} $ml={6}>General*</TitleSlot>
        <TitleSlot $w={517} $ml={117}><SearchBox><SearchGlass c="#444" />Search</SearchBox></TitleSlot>
        <TitleSlot $w={253} $ml={243}><UserName>Mr.Tanmoy Biswas Jini's Chosmo</UserName><Avatar>MB</Avatar></TitleSlot>
        <TitleSlot $w={14} $ml={36}><WinMin /></TitleSlot>
        <TitleSlot $w={14} $ml={46}><WinRestore /></TitleSlot>
        <TitleSlot $w={14} $ml={46}><WinClose /></TitleSlot>
      </TitleBar>

      <TabRow>
        {[['File', 24, 33], ['Home', 48, 22, true], ['Insert', 43, 23], ['Draw', 40, 23], ['Design', 52, 23], ['Layout', 51, 25], ['References', 82, 24], ['Mailings', 63, 25], ['Review', 52, 25], ['View', 36, 24], ['Help', 35, 0]].map(([t, w, gap, on]) => (
          <Tab key={t} $w={w} $gap={gap} $on={on}>{t}</Tab>
        ))}
        <TabActions>
          <ActionButton $w={124}><CommentIco />Comments</ActionButton>
          <ActionButton $w={108}><PencilIco />Editing<Chev /></ActionButton>
          <ActionButton $w={101} $blue><ShareIco />Share<ShareChev><Chev /></ShareChev></ActionButton>
        </TabActions>
      </TabRow>

      <Ribbon>
        <Group $w={109}>
          <GroupBody>
            <ClipCols>
              <PasteCol>
                <PasteArt><PasteIco /></PasteArt>
                <BigLabel $mt={7}>Paste</BigLabel>
                <BigChev><Chev /></BigChev>
              </PasteCol>
              <SmallCol>
                <SmallIcon><CutIco /></SmallIcon>
                <SmallIcon><CopyIco /></SmallIcon>
                <SmallIcon><BrushIco /></SmallIcon>
              </SmallCol>
            </ClipCols>
          </GroupBody>
          <GroupFoot label="Clipboard" launch />
        </Group>

        <Group $w={385}>
          <GroupBody>
            <Rows>
              <ToolRow start={119} items={[
                [207, 156, <Select>Aptos (Body)<Chev /></Select>],
                [314, 54, <Select>12<Chev /></Select>],
                [358, 24, <GrowA up />],
                [391, 24, <GrowA />],
                [407, 1, <Sep />],
                [427, 28, <AaText>Aa</AaText>],
                [446, 10, <Chev />],
                [462, 1, <Sep />],
                [480, 24, <ClearIco />],
              ]} />
              <ToolRow start={119} items={[
                [144, 24, <Letter $b $fs={16}>B</Letter>],
                [176, 24, <Letter $i $serif $fs={17}>I</Letter>],
                [207, 24, <Letter $u $fs={16}>U</Letter>],
                [231, 10, <Chev />],
                [259, 26, <Letter $s $fs={15}>ab</Letter>],
                [294, 26, <Letter $b $fs={15}>x<Sub>2</Sub></Letter>],
                [325, 26, <Letter $b $fs={15}>x<Sup>2</Sup></Letter>],
                [340, 1, <Sep />],
                [358, 24, <OutlineA>A</OutlineA>],
                [379, 10, <Chev />],
                [410, 24, <ColorA><Marker /><Swatch $c="#ffff00" /></ColorA>],
                [433, 10, <Chev />],
                [461, 24, <ColorA><ThinA /><Swatch $c="#ff0000" /></ColorA>],
                [484, 10, <Chev />],
              ]} />
            </Rows>
          </GroupBody>
          <GroupFoot label="Font" launch />
        </Group>

        <Group $w={309}>
          <GroupBody>
            <Rows>
              <ToolRow start={504} items={[
                [530, 22, <Bullets />],
                [553, 10, <Chev />],
                [581, 22, <Numbers />],
                [604, 10, <Chev />],
                [632, 22, <Multi />],
                [653, 10, <Chev />],
                [669, 1, <Sep />],
                [687, 20, <Indent out />],
                [719, 20, <Indent />],
                [736, 1, <Sep />],
                [754, 22, <SortIco />],
                [771, 1, <Sep />],
                [788, 16, <Pilcrow />],
              ]} />
              <ToolRow start={504} items={[
                [530, 29, <Pressed><Lines kind="left" /></Pressed>],
                [562, 20, <Lines kind="center" />],
                [594, 20, <Lines kind="right" />],
                [626, 20, <Lines kind="just" />],
                [643, 1, <Sep />],
                [661, 22, <LineSp />],
                [682, 10, <Chev />],
                [698, 1, <Sep />],
                [716, 22, <Shade />],
                [739, 10, <Chev />],
                [766, 22, <Borders />],
                [790, 10, <Chev />],
              ]} />
            </Rows>
          </GroupBody>
          <GroupFoot label="Paragraph" launch />
        </Group>

        <Group $w={587}>
          <GroupBody>
            <Gallery>
              <StyleTile $sel $fs={18}>Normal</StyleTile>
              <StyleTile $fs={18}>No Spacing</StyleTile>
              <StyleTile $left $head $fs={28}>Heading 1</StyleTile>
              <StyleTile $head $fs={22.500}>Heading 2</StyleTile>
              <GalleryScroll>
                <GalleryBtn><svg width="8" height="5" viewBox="0 0 8 5"><path d="M.7 4.300 4 1l3.300 3.300" fill="none" stroke="#999" /></svg></GalleryBtn>
                <GalleryBtn $line><Chev /></GalleryBtn>
                <GalleryBtn $line><QatIco c="#444" /></GalleryBtn>
              </GalleryScroll>
            </Gallery>
          </GroupBody>
          <GroupFoot label="Styles" launch />
        </Group>

        <Group $w={115}>
          <GroupBody>
            <EditCol>
              <EditRow><EditIcon><FindIco /></EditIcon>Find<EditChev $ml={16}><Chev /></EditChev></EditRow>
              <EditRow><EditIcon><ReplaceIco /></EditIcon>Replace</EditRow>
              <EditRow><EditIcon><SelectIco /></EditIcon>Select<EditChev $ml={3}><Chev /></EditChev></EditRow>
            </EditCol>
          </GroupBody>
          <GroupFoot label="Editing" />
        </Group>

        <Group $w={74}>
          <GroupBody>
            <BigCol>
              <BigIcon><Mic /></BigIcon>
              <BigLabel $mt={5}>Dictate</BigLabel>
              <BigChev><Chev /></BigChev>
            </BigCol>
          </GroupBody>
          <GroupFoot label="Voice" />
        </Group>

        <Group $w={91}>
          <GroupBody>
            <BigCol>
              <BigIcon><Sensi /></BigIcon>
              <BigLabel $mt={5}>Sensitivity</BigLabel>
              <BigChev><Chev /></BigChev>
            </BigCol>
          </GroupBody>
          <GroupFoot label="Sensitivity" />
        </Group>

        <Group $w={71}>
          <GroupBody>
            <BigCol>
              <BigIcon><EditorIco /></BigIcon>
              <BigLabel $mt={5}>Editor</BigLabel>
            </BigCol>
          </GroupBody>
          <GroupFoot label="Editor" />
        </Group>

        <Group $w={77}>
          <GroupBody>
            <BigCol>
              <BigIcon><AddIns /></BigIcon>
              <BigLabel $mt={5}>Add-ins</BigLabel>
            </BigCol>
          </GroupBody>
          <GroupFoot label="Add-ins" />
        </Group>

        <Collapse><Chev w={11} h={7} /></Collapse>
      </Ribbon>

      <Workspace>
        <Page>
          <DocTable>
            <colgroup><col width="260" /><col width="260" /><col width="260" /></colgroup>
            <tbody>
              <tr>
                <Cell $h={97}><Line>1. Bed type</Line><Line>2. bed group</Line><Line>3.</Line><Line>4. bed entry</Line></Cell>
                <Cell $h={97}><Line>Mrinmoy da</Line></Cell>
                <Cell $h={97} />
              </tr>
              <tr>
                <Cell $h={49}><Line>TPA section</Line><Line>Floor section</Line></Cell>
                <Cell $h={49}><Line><Spell>tanmoy</Spell></Line></Cell>
                <Cell $h={49} />
              </tr>
              <tr>
                <Cell $h={97}><Line>word <Grammar>entry</Grammar></Line><Line>role entry</Line><Line>department</Line><Line><Spell>doctory</Spell></Line></Cell>
                <Cell $h={97}><Line><Spell>sani</Spell></Line></Cell>
                <Cell $h={97} />
              </tr>
            </tbody>
          </DocTable>
        </Page>
        <ScrollTrack>
          <ScrollArrow up />
          <ScrollThumb />
          <ScrollArrow />
        </ScrollTrack>
      </Workspace>

      <StatusBar>
        <StatusItem $w={66} $ml={14}>Page 1 of 1</StatusItem>
        <StatusItem $w={54} $ml={26}>24 words</StatusItem>
        <StatusItem $w={19} $ml={24}><ProofIco /></StatusItem>
        <StatusItem $w={130} $ml={21}>English (United States)</StatusItem>
        <StatusItem $w={115} $ml={23}>Text Predictions: On</StatusItem>
        <StatusItem $w={168} $ml={24}><A11y />Accessibility: Good to go</StatusItem>
        <StatusItem $w={54} $ml={796}><FocusIco />Focus</StatusItem>
        <StatusItem $w={18} $ml={30}><ReadIco /></StatusItem>
        <StatusItem $w={50} $ml={15} $on $center><PrintIco /></StatusItem>
        <StatusItem $w={19} $ml={16}><WebIco /></StatusItem>
        <StatusItem $w={10} $ml={24}><svg width="10" height="2"><rect width="10" height="1.200" fill="#eee" /></svg></StatusItem>
        <Slider><Thumb /></Slider>
        <StatusItem $w={11} $ml={5}><svg width="11" height="11"><path d="M0 5.500h11M5.500 0v11" stroke="#eee" strokeWidth="1.100" /></svg></StatusItem>
        <StatusItem $w={32} $ml={16}>100%</StatusItem>
      </StatusBar>

      <Taskbar>
        <Weather>
          <WeatherIcon><WeatherArt /><Badge>1</Badge></WeatherIcon>
          <WeatherText><WeatherTemp>19°C</WeatherTemp>Mostly clear</WeatherText>
        </Weather>
        <StartBtn><WinLogo /></StartBtn>
        <TaskSearch>
          <SearchGlassTask />
          Search
          <TaskSearchEnd><Pistachio /></TaskSearchEnd>
        </TaskSearch>
        <Apps>
          <AppIcon><Copilot /></AppIcon>
          <AppIcon><TaskView /></AppIcon>
          <AppIcon><Explorer /></AppIcon>
          <AppIcon><Edge /></AppIcon>
          <AppIcon><FaWhatsapp size={32} color="#25d366" /></AppIcon>
          <AppIcon><Chrome /></AppIcon>
          <AppIcon><VscVscode size={32} color="#1f9ce4" /><Dot /></AppIcon>
          <AppIcon><Firefox /><Dot /></AppIcon>
        </Apps>
        <ActiveApp><WordLogo s={30} /><ActiveBar /></ActiveApp>
        <Tray>
          <TrayItem $w={14} $ml={0}><TrayChevron /></TrayItem>
          <TrayItem $w={21} $ml={22}><OneDrive /></TrayItem>
          <TrayText $w={34} $ml={20}>ENG<br />IN</TrayText>
          <TrayItem $w={20} $ml={20}><Wifi /></TrayItem>
          <TrayItem $w={20} $ml={10}><Vol /></TrayItem>
          <TrayItem $w={20} $ml={10}><Battery /></TrayItem>
          <TrayText $w={75} $ml={15} $right>9:13 PM<br />26-Feb-24</TrayText>
          <TrayItem $w={18} $ml={11}><Bell /></TrayItem>
        </Tray>
      </Taskbar>
    </Screen>
  );
}
